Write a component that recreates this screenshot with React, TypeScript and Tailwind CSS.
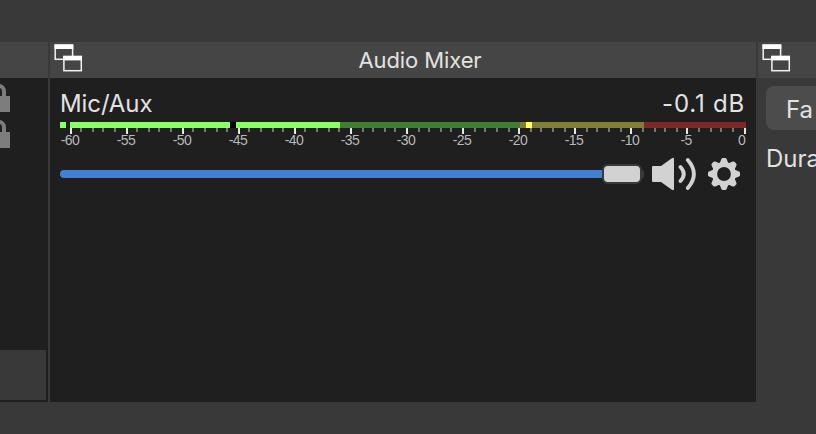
const MAJOR = [70, 126, 182, 238, 294, 350, 406, 462, 518, 574, 630, 686, 744];
const MINOR = [
  80, 92, 102, 114, 136, 148, 158, 170, 192, 204, 216, 226, 248, 260, 272, 282, 304, 316, 328, 338, 362, 372, 384,
  394, 418, 428, 440, 450, 474, 484, 496, 508, 530, 540, 552, 564, 586, 596, 608, 620, 642, 654, 664, 676, 698, 710,
  720, 732,
];
const LABELS = ['-60', '-55', '-50', '-45', '-40', '-35', '-30', '-25', '-20', '-15', '-10', '-5'];

// x, width and colour of each run of the level bar
const LEVELS: [number, number, string][] = [
  [60, 6, '#8aff68'],
  [70, 160, '#8aff68'],
  [230, 6, '#000000'],
  [236, 104, '#8aff68'],
  [340, 180, '#437d31'],
  [520, 124, '#807f35'],
  [526, 6, '#ffff60'],
  [644, 102, '#7b2a29'],
];

function PopOutIcon() {
  return (
    <svg width="30" height="30" viewBox="0 0 30 30" className="shrink-0">
      <rect x="1.2" y="1" width="17.4" height="14.3" fill="#454545" stroke="#f2f2f2" strokeWidth="1.5" />
      <rect x="0.5" y="0.6" width="18.8" height="4.4" fill="#fff" />
      <rect x="9.9" y="12.4" width="17.4" height="14.3" fill="#454545" stroke="#f2f2f2" strokeWidth="1.5" />
      <rect x="9.2" y="12" width="18.8" height="4.4" fill="#fff" />
    </svg>
  );
}

function LockIcon() {
  return (
    <svg width="20" height="36" viewBox="0 0 20 36" className="-ml-2.5 block">
      <path d="M4 19V13.5a5 5.5 0 0 1 10 0V19" fill="none" stroke="#7d7d7d" strokeWidth="4" />
      <rect x="0" y="18" width="20" height="16" fill="#7d7d7d" />
    </svg>
  );
}

function Meter() {
  return (
    <svg width="690" height="12" viewBox="60 122 690 12" className="block" shapeRendering="crispEdges">
      {LEVELS.map(([x, w, c]) => (
        <rect key={x} x={x} y="122" width={w} height="6" fill={c} />
      ))}
      {MAJOR.map((x) => (
        <rect key={x} x={x} y="128" width="2" height="6" fill="#e6e6e6" />
      ))}
      {MINOR.map((x) => (
        <rect key={x} x={x} y="128" width="2" height="4" fill="#767676" />
      ))}
    </svg>
  );
}

function SpeakerIcon() {
  return (
    <svg width="46" height="36" viewBox="0 0 46 36" className="shrink-0">
      <path d="M2 10H10L20.5 2.5Q23 1 23 3V33Q23 35 20.5 33.5L10 26H2Q1 26 1 25V11Q1 10 2 10Z" fill="#d2d2d2" />
      <path d="M29.5 11Q36 18 29.5 25M36.8 4Q49 18 36.8 32" fill="none" stroke="#d2d2d2" strokeWidth="3.8" strokeLinecap="round" />
    </svg>
  );
}

function GearIcon() {
  return (
    <svg width="32" height="32" viewBox="-16 -16 32 32" className="shrink-0">
      {[0, 45, 90, 135, 180, 225, 270, 315].map((a) => (
        <path
          key={a}
          d="M-5 -9L-2.6 -15Q-2.2 -16 -1.2 -16H1.2Q2.2 -16 2.6 -15L5 -9Z"
          transform={`rotate(${a})`}
          fill="#d2d2d2"
        />
      ))}
      <circle r="9.4" fill="none" stroke="#d2d2d2" strokeWidth="5" />
    </svg>
  );
}

export default function App() {
  return (
    <div className="flex h-[434px] w-[816px] flex-col overflow-hidden bg-[#393939] pt-[42px] font-['Inter','Liberation_Sans',sans-serif] text-[#e2e2e2]">
      <div className="flex h-[360px] gap-0.5">
        <aside className="flex w-12 shrink-0 flex-col bg-[#1f1f1f]">
          <div className="h-9 bg-[#454545]" />
          <LockIcon />
          <LockIcon />
          <div className="mt-auto mb-0.5 h-[50px] w-[46px] bg-[#393939]" />
        </aside>

        <main className="flex w-[706px] shrink-0 flex-col bg-[#1f1f1f]">
          <header className="flex h-9 bg-[#454545] pl-1">
            <div className="pt-0.5">
              <PopOutIcon />
            </div>
            <h1 className="flex-1 text-center text-[22px] leading-9 tracking-[-0.1px]">Audio Mixer</h1>
          </header>
          <section className="px-2.5">
            <div className="flex h-11 items-center justify-between pt-2 pr-px text-2xl">
              <span className="tracking-[-0.1px]">Mic/Aux</span>
              <span className="tracking-[0.8px]">-0.1 dB</span>
            </div>
            <Meter />
            <div className="-mt-px -ml-[18px] flex h-[13px] font-['Liberation_Sans',sans-serif] text-[14px] leading-[14px] tracking-[-0.6px] text-[#b8b8b8]">
              {LABELS.map((l) => (
                <span key={l} className="w-14 shrink-0 text-center">
                  {l}
                </span>
              ))}
              <span className="ml-6 w-3">0</span>
            </div>
            <div className="flex h-14 items-center">
              <div className="flex w-[584px] items-center">
                <div className="h-2 flex-1 rounded-l-full bg-[#437fd0]" />
                <div className="h-5 w-10 rounded-md border-2 border-[#3a3a3a] bg-[#d2d2d2]" />
                <div className="h-2 w-0.5 rounded-r bg-[#3a3a3a]" />
              </div>
              <div className="ml-[7px]">
                <SpeakerIcon />
              </div>
              <div className="ml-[11px]">
                <GearIcon />
              </div>
            </div>
          </section>
        </main>

        <aside className="flex w-[58px] shrink-0 flex-col overflow-hidden">
          <header className="flex h-9 bg-[#454545] pt-0.5 pl-1">
            <PopOutIcon />
          </header>
          <div className="mt-2 ml-2 h-11 w-20 rounded-lg bg-[#4c4c4c] pl-5 text-2xl leading-[47px]">Fa</div>
          <div className="mt-3 pl-2 text-2xl leading-[33px] whitespace-nowrap">Dura</div>
        </aside>
      </div>
    </div>
  );
}
